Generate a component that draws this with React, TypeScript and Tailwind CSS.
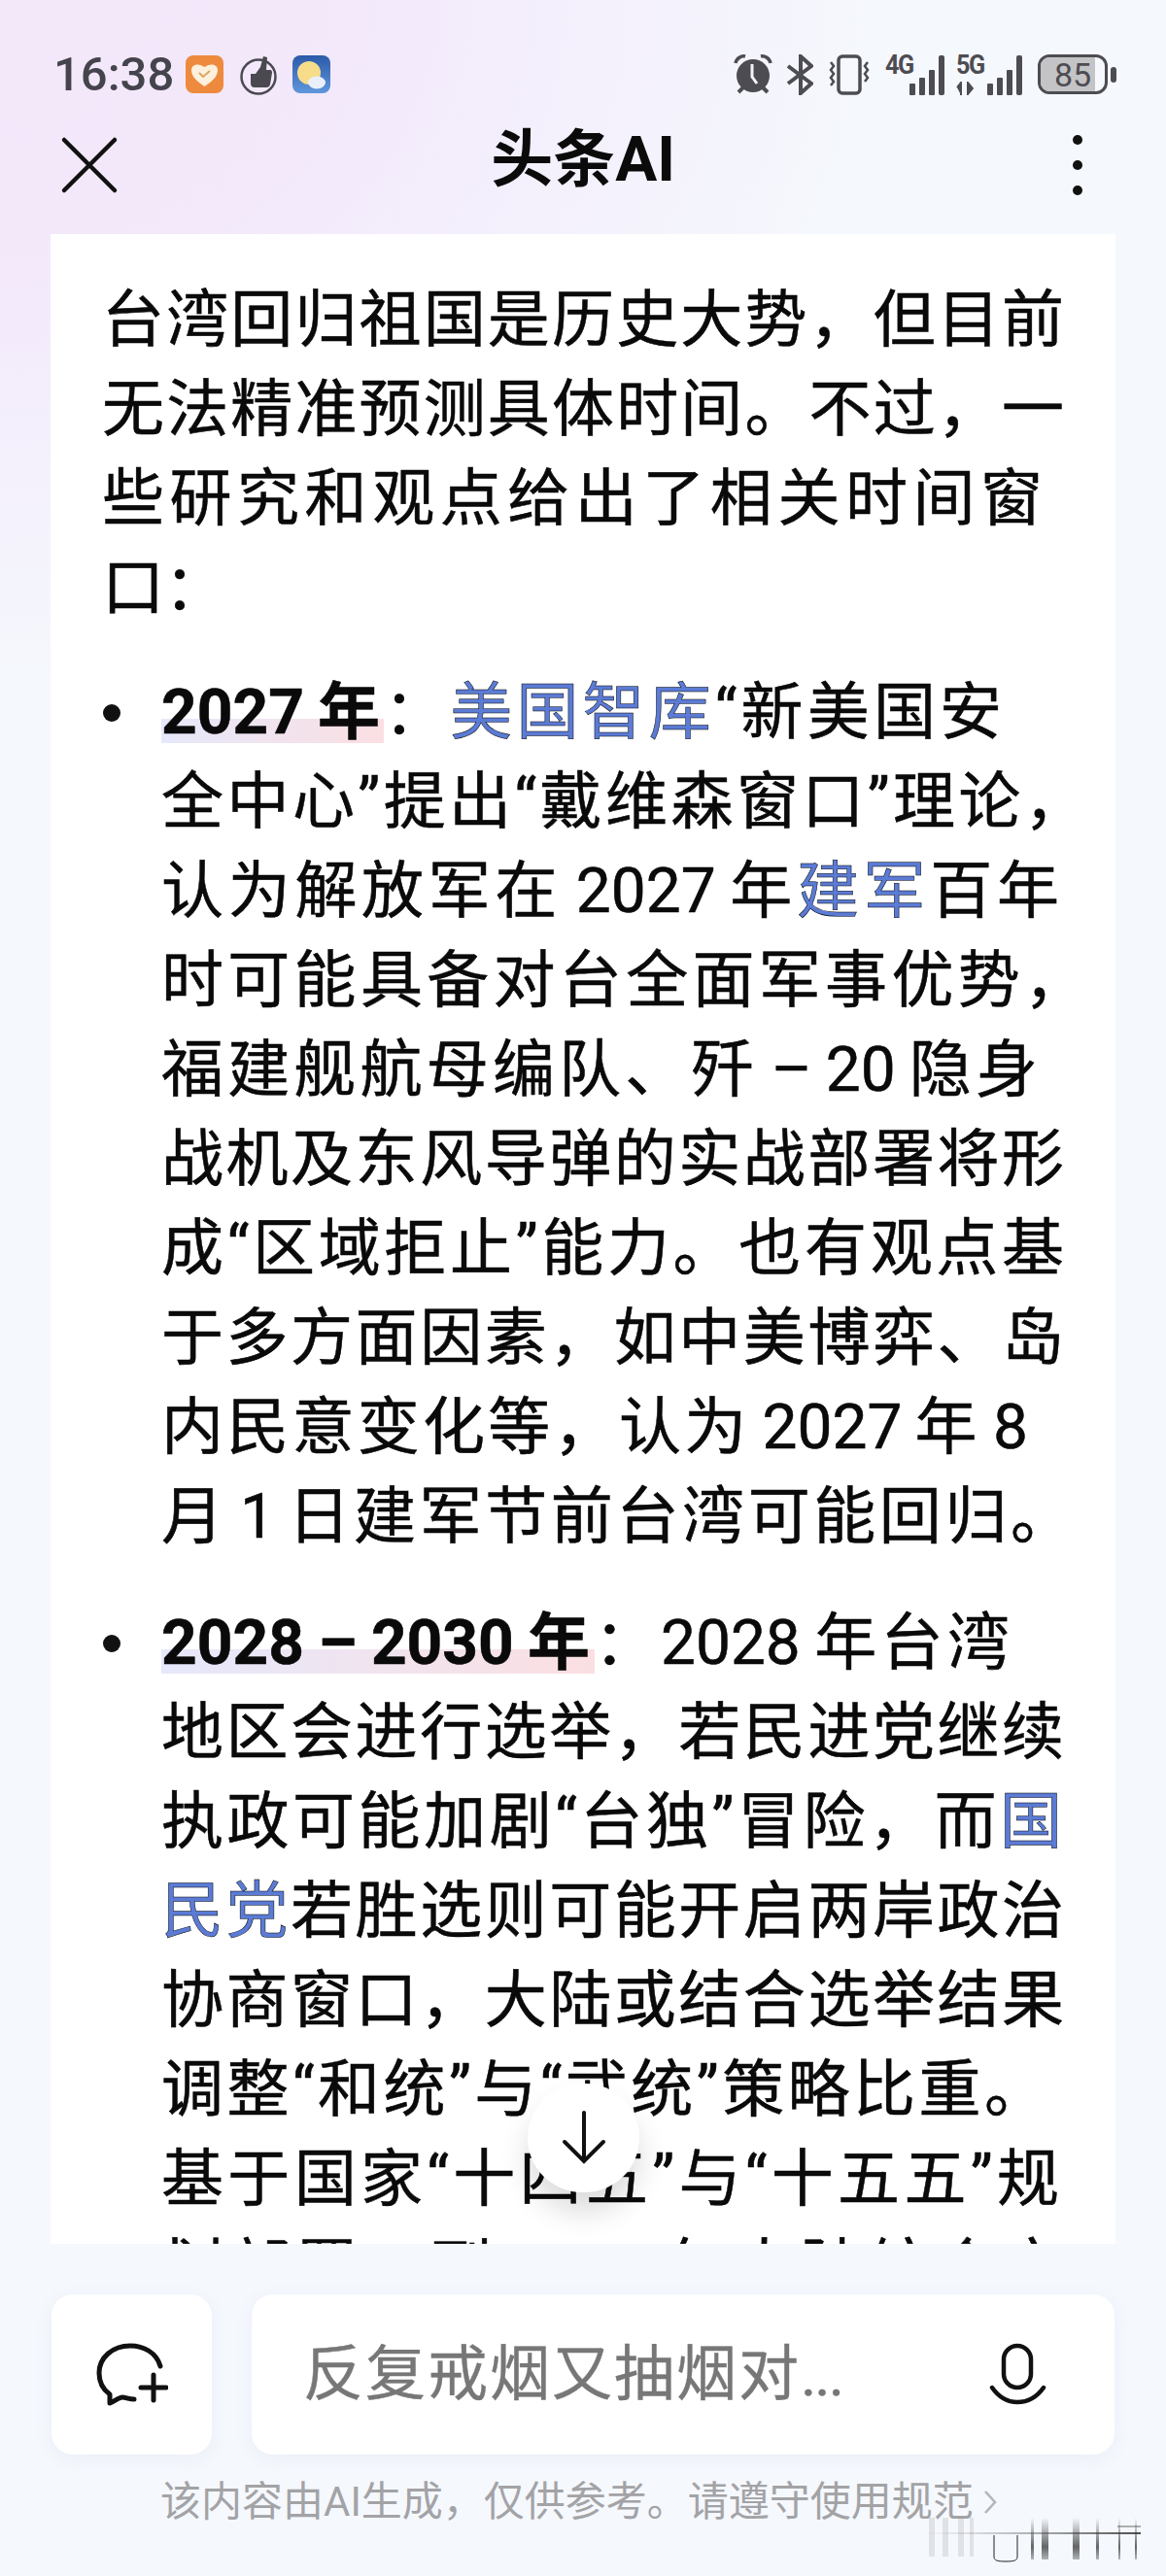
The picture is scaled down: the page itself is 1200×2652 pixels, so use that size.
import React from 'react'

const CJK = "font-['Roboto','Noto_Sans_CJK_SC',sans-serif]"

function Lnk({ children }: { children: React.ReactNode }) {
  return <span className="text-[#5b7bd5]">{children}</span>
}

function Hl({ children }: { children: React.ReactNode }) {
  return (
    <span className="font-bold bg-[linear-gradient(90deg,#e6e8fb,#fbdfe2)] bg-no-repeat bg-[length:100%_25px] bg-[position:0_44px]">
      {children}
    </span>
  )
}

// every line of the screenshot is stretched to its own width, so each one carries it
function Line({ w, children }: { w?: string; children: React.ReactNode }) {
  return (
    <div className={`h-[92px] leading-[92px] whitespace-nowrap text-justify [text-align-last:justify] ${w ?? 'w-fit'}`}>
      {children}
    </div>
  )
}

function Bullet({ children }: { children: React.ReactNode }) {
  return (
    <div className="relative pl-[61px]">
      <span className="absolute left-[1px] top-[37px] w-[18px] h-[18px] rounded-full bg-[#111]" />
      {children}
    </div>
  )
}

function StatusLeft() {
  return (
    <div className="flex items-center">
      <span className="text-[49px] leading-none font-medium font-['Roboto',sans-serif] text-[#45434c] w-[136px]">16:38</span>
      <svg width="39" height="39" viewBox="0 0 39 39">
        <rect width="39" height="39" rx="8" fill="#ee8a3e" />
        <path d="M19.5 32C12 27 6 22 6 15c0-5 6-8 13.500-3C27 7 33 10 33 15c0 7-6 12-13.500 17z" fill="#fdf1de" />
        <path d="M14 18l4 4 7-6" fill="none" stroke="#d9a860" strokeWidth="2" />
      </svg>
      <svg className="ml-[17px]" width="39" height="42" viewBox="0 0 39 42">
        <circle cx="19" cy="23" r="17.500" fill="none" stroke="#4a4950" strokeWidth="2.500" />
        <path d="M11 20h5l5-7 3-11 4 1-1 13h4c2 0 2 2 2 3l-2 12c-1 3-3 3-5 3H15c-3 0-4-2-4-4z" fill="#4a4950" />
      </svg>
      <svg className="ml-[15px]" width="39" height="39" viewBox="0 0 39 39">
        <defs>
          <linearGradient id="wx" x1="0" y1="0" x2="0" y2="1">
            <stop offset="0" stopColor="#2c5aa8" />
            <stop offset="1" stopColor="#5f97dc" />
          </linearGradient>
        </defs>
        <rect width="39" height="39" rx="8" fill="url(#wx)" />
        <circle cx="17" cy="18" r="12" fill="#f7dc8a" />
        <ellipse cx="25" cy="28" rx="9" ry="6.500" fill="#e9f0fa" />
      </svg>
    </div>
  )
}

function Signal({ label, width, small }: { label: string; width: string; small?: boolean }) {
  return (
    <div className={`relative h-[42px] ${width}`}>
      <span className="absolute left-0 top-[-3px] text-[28px] leading-[28px] font-bold font-['Roboto',sans-serif] text-[#4d4c52] tracking-[-1.5px] scale-x-90 origin-left">{label}</span>
      {small && (
        <svg className="absolute left-0 bottom-0" width="18" height="14" viewBox="0 0 18 14">
          <path d="M5 14V1L1 6M12 1v12l5-6z" fill="#4d4c52" stroke="#4d4c52" strokeWidth="2" />
        </svg>
      )}
      <div className="absolute right-0 bottom-0 flex items-end gap-[4px]">
        <span className="w-[6px] h-[12px] rounded-[1px] bg-[#4d4c52]" />
        <span className="w-[6px] h-[18px] rounded-[1px] bg-[#4d4c52]" />
        <span className="w-[6px] h-[26px] rounded-[1px] bg-[#4d4c52]" />
        <span className="w-[6px] h-[41px] rounded-[2px] bg-[#4d4c52]" />
      </div>
    </div>
  )
}

function StatusRight() {
  const c = '#4d4c52'
  return (
    <div className="flex items-center">
      <svg width="40" height="42" viewBox="0 0 40 42">
        <circle cx="20" cy="22" r="17" fill={c} />
        <path d="M2 9c1-5 6-8 10-7M38 9c-1-5-6-8-10-7" fill="none" stroke={c} strokeWidth="3.500" />
        <path d="M5 39l5-5M35 39l-5-5" stroke={c} strokeWidth="4" />
        <path d="M19 10v13l5 7" fill="none" stroke="#f5f2fb" strokeWidth="3" />
      </svg>
      <svg className="ml-[14px]" width="28" height="42" viewBox="0 0 28 42">
        <path d="M2 12l24 18-11 10V2l11 10L2 30" fill="none" stroke={c} strokeWidth="4" />
      </svg>
      <svg className="ml-[14px]" width="46" height="42" viewBox="0 0 46 42">
        <rect x="12" y="2" width="22" height="38" rx="4" fill="none" stroke={c} strokeWidth="3.500" />
        <path d="M4 8l3 4-3 4 3 4-3 4 3 4-3 4M42 8l-3 4 3 4-3 4 3 4-3 4" fill="none" stroke={c} strokeWidth="2.500" />
      </svg>
      <div className="ml-[14px]">
        <Signal label="4G" width="w-[61px]" />
      </div>
      <div className="ml-[12px]">
        <Signal label="5G" width="w-[68px]" small />
      </div>
      <div className="ml-[16px] flex items-center">
        <div className="relative w-[72px] h-[41px] rounded-[12px] border-[3px] border-[#4d4c52] overflow-hidden flex items-center justify-center">
          <span className="absolute left-0 top-0 bottom-0 w-[56px] bg-[#c4c4c6]" />
          <span className="relative text-[34px] leading-none font-['Roboto',sans-serif] text-[#4d4c52]">85</span>
        </div>
        <span className="ml-[3px] w-[6px] h-[16px] rounded-[3px] bg-[#4d4c52]" />
      </div>
    </div>
  )
}

// the smudged watermark that lies over the bottom right corner of the screenshot
function Smudge() {
  return (
    <svg className="absolute left-[940px] top-[2590px]" width="240" height="50" viewBox="0 0 240 50">
      <defs>
        <linearGradient id="fade" x1="0" y1="0" x2="0" y2="1">
          <stop offset="0" stopColor="#333" stopOpacity="0" />
          <stop offset="0.7" stopColor="#333" stopOpacity="0.75" />
          <stop offset="1" stopColor="#333" stopOpacity="0.35" />
        </linearGradient>
        <linearGradient id="fadeL" x1="0" y1="0" x2="1" y2="0">
          <stop offset="0" stopColor="#666" stopOpacity="0" />
          <stop offset="1" stopColor="#222" stopOpacity="0.8" />
        </linearGradient>
      </defs>
      <g fill="#999" opacity="0.22">
        <rect x="16" y="2" width="6" height="40" />
        <rect x="30" y="2" width="6" height="40" />
        <rect x="46" y="2" width="6" height="40" />
        <rect x="58" y="2" width="4" height="40" />
      </g>
      <rect x="10" y="17" width="224" height="2" fill="url(#fadeL)" />
      <rect x="210" y="10" width="24" height="2" fill="#666" opacity="0.5" />
      <path d="M83 20v22c0 4 3 5 12 5s12-1 12-5V20" fill="none" stroke="#222" strokeWidth="1" />
      <rect x="121" y="2" width="3" height="43" fill="url(#fade)" />
      <rect x="132" y="2" width="7" height="43" fill="url(#fade)" />
      <rect x="164" y="2" width="7" height="43" fill="url(#fade)" />
      <rect x="188" y="2" width="3" height="43" fill="url(#fade)" />
      <rect x="211" y="2" width="2" height="43" fill="url(#fade)" />
      <rect x="228" y="2" width="2" height="43" fill="url(#fade)" />
    </svg>
  )
}

export default function App() {
  return (
    <div className={`relative w-[1200px] h-[2652px] flex flex-col overflow-hidden bg-[#f5f8fd] bg-[radial-gradient(ellipse_900px_700px_at_0%_0%,#f3e7fa_0%,#f3e9fb_40%,#f5f8fd_100%)] ${CJK}`}>
      <div className="h-[97px] shrink-0 pt-[56px] pl-[55px] pr-[51px] flex items-center justify-between">
        <StatusLeft />
        <StatusRight />
      </div>
      <header className="h-[144px] shrink-0 pb-[8px] relative flex items-center justify-center">
        <svg className="absolute left-[62px] top-[43px]" width="60" height="60" viewBox="0 0 60 60">
          <path d="M4 4l52 52M56 4L4 56" stroke="#111" strokeWidth="4.500" strokeLinecap="round" />
        </svg>
        <h1 className="text-[64px] font-bold text-[#0b0b0b] leading-none">头条AI</h1>
        <div className="absolute left-[1104px] top-[42px] flex flex-col gap-[16px]">
          <span className="w-[10px] h-[10px] rounded-full bg-[#111]" />
          <span className="w-[10px] h-[10px] rounded-full bg-[#111]" />
          <span className="w-[10px] h-[10px] rounded-full bg-[#111]" />
        </div>
      </header>
      <main className="relative h-[2069px] shrink-0 mx-[52px]">
        <div className="h-full bg-white overflow-hidden pl-[53px] pt-[43px] text-[64px] [-webkit-text-stroke:0.5px_#000] [word-spacing:-6px] text-[#0a0a0a]">
          <Line w="w-[990px]">台湾回归祖国是历史大势，但目前</Line>
          <Line w="w-[990px]">无法精准预测具体时间。不过，一</Line>
          <Line w="w-[968px]">些研究和观点给出了相关时间窗</Line>
          <Line>口：</Line>
          <div className="h-[36px]" />
          <Bullet>
            <Line w="w-[865px]"><Hl>2027 年</Hl>：<Lnk>美国智库</Lnk>“新美国安</Line>
            <Line w="w-[952px]">全中心”提出“戴维森窗口”理论，</Line>
            <Line w="w-[924px]">认为解放军在 2027 年<Lnk>建军</Lnk>百年</Line>
            <Line w="w-[952px]">时可能具备对台全面军事优势，</Line>
            <Line w="w-[902px]">福建舰航母编队、歼 – 20 隐身</Line>
            <Line w="w-[929px]">战机及东风导弹的实战部署将形</Line>
            <Line w="w-[929px]">成“区域拒止”能力。也有观点基</Line>
            <Line w="w-[929px]">于多方面因素，如中美博弈、岛</Line>
            <Line w="w-[892px]">内民意变化等，认为 2027 年 8</Line>
            <Line w="w-[938px]">月 1 日建军节前台湾可能回归。</Line>
          </Bullet>
          <div className="h-[38px]" />
          <Bullet>
            <Line w="w-[873px]"><Hl>2028 – 2030 年</Hl>：2028 年台湾</Line>
            <Line w="w-[929px]">地区会进行选举，若民进党继续</Line>
            <Line w="w-[927px]">执政可能加剧“台独”冒险，而<Lnk>国</Lnk></Line>
            <Line w="w-[929px]"><Lnk>民党</Lnk>若胜选则可能开启两岸政治</Line>
            <Line w="w-[929px]">协商窗口，大陆或结合选举结果</Line>
            <Line w="w-[911px]">调整“和统”与“武统”策略比重。</Line>
            <Line w="w-[924px]">基于国家“十四五”与“十五五”规</Line>
            <Line w="w-[929px]">划部署，到 2035 年大陆综合实</Line>
          </Bullet>
        </div>
        <button className="absolute left-[491px] bottom-[53px] w-[115px] h-[112px] rounded-full bg-white shadow-[0_20px_30px_rgba(0,0,0,0.14)] flex items-center justify-center">
          <svg width="46" height="56" viewBox="0 0 46 56">
            <path d="M23 2v50M3 32l20 20 20-20" fill="none" stroke="#111" strokeWidth="4" strokeLinecap="round" />
          </svg>
        </button>
      </main>
      <div className="mt-[52px] mx-[53px] flex gap-[41px] shrink-0">
        <button className="w-[165px] h-[165px] rounded-[22px] bg-white shadow-[0_4px_18px_rgba(120,130,160,0.08)] flex items-center justify-center">
          <svg width="74" height="66" viewBox="0 0 74 66">
            <path d="M66 24C62 10 49 3 35 3 17 3 3 15 3 31c0 9 4 17 11 22v9c4-1 9-6 13-6 3 0 7 2 12 2M46 46h26M59 33v26" fill="none" stroke="#111" strokeWidth="5" strokeLinecap="round" strokeLinejoin="round" />
          </svg>
        </button>
        <div className="flex-1 h-[165px] rounded-[22px] bg-white shadow-[0_4px_18px_rgba(120,130,160,0.08)] flex items-center justify-between pl-[53px] pr-[69px]">
          <span className="text-[62px] text-[#777] [-webkit-text-stroke:0.4px_#777] tracking-[2px] leading-none">反复戒烟又抽烟对<span className="tracking-[-2px]">...</span></span>
          <svg width="60" height="65" viewBox="0 0 60 65">
            <rect x="15" y="3" width="28" height="43" rx="14" fill="none" stroke="#111" strokeWidth="4.500" />
            <path d="M3 46c7 10 15 15 26 15s20-5 27-15" fill="none" stroke="#111" strokeWidth="4.500" strokeLinecap="round" />
          </svg>
        </div>
      </div>
      <div className="mt-[24px] pl-[165px] flex items-center text-[#a3a3a6] text-[42px] leading-[50px] whitespace-nowrap">
        <span>该内容由AI生成，仅供参考。请遵守使用规范</span>
        <svg className="ml-[10px]" width="14" height="26" viewBox="0 0 14 26">
          <path d="M2 2l10 11L2 24" fill="none" stroke="#b5b5b8" strokeWidth="2.500" />
        </svg>
      </div>
      <Smudge />
    </div>
  )
}
